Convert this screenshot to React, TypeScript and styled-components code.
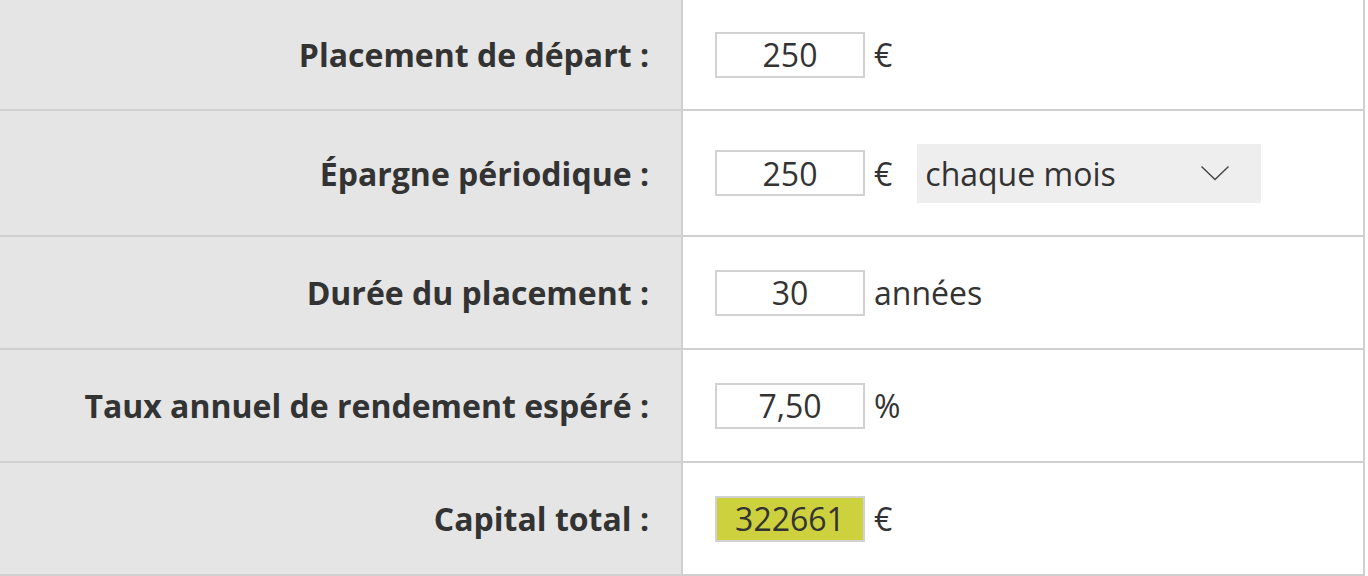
import styled, { createGlobalStyle } from "styled-components";

const GlobalStyle = createGlobalStyle`
  html, body {
    margin: 0;
    padding: 0;
    background: #ffffff;
  }
  body {
    font-family: "Open Sans", "Noto Sans", sans-serif;
    color: #333333;
  }
`;

const rows = [
  { label: "Placement de départ :", value: "250", unit: "€", height: 109 },
  { label: "Épargne périodique :", value: "250", unit: "€", height: 124, select: "chaque mois" },
  { label: "Durée du placement :", value: "30", unit: "années", height: 111 },
  { label: "Taux annuel de rendement espéré :", value: "7,50", unit: "%", height: 111 },
  { label: "Capital total :", value: "322661", unit: "€", height: 111, result: true },
];

const App = () => {
  return (
    <>
      <GlobalStyle />
      <Table>
        {rows.map((row) => (
          <Row key={row.label} $height={row.height}>
            <LabelCell>
              <Label>{row.label}</Label>
            </LabelCell>
            <FieldCell>
              <NumberBox $result={row.result}>{row.value}</NumberBox>
              <Unit>{row.unit}</Unit>
              {row.select && (
                <Select>
                  <span>{row.select}</span>
                  <Chevron width="30" height="16" viewBox="0 0 30 16">
                    <path d="M1.5 1.5 L15 14.5 L28.5 1.5" fill="none" stroke="#444" strokeWidth="1.4" />
                  </Chevron>
                </Select>
              )}
            </FieldCell>
          </Row>
        ))}
      </Table>
    </>
  );
};

const Table: any = styled.div`
  width: 1365px;
  display: flex;
  flex-direction: column;
`;

const Row: any = styled.div<{ $height: number }>`
  display: grid;
  grid-template-columns: 681px 680px;
  column-gap: 2px;
  background: #d0d0d0;
  padding-right: 2px;
  height: ${(p) => p.$height}px;
  border-bottom: 2px solid #d0d0d0;
`;

const LabelCell: any = styled.div`
  background: #e5e5e5;
  display: flex;
  align-items: center;
  justify-content: flex-end;
  padding-right: 32px;
`;

const Label: any = styled.span`
  font-size: 32px;
  font-weight: 700;
  color: #333333;
`;

const FieldCell: any = styled.div`
  background: #ffffff;
  display: flex;
  align-items: center;
  padding-left: 32px;
`;

const NumberBox: any = styled.div<{ $result?: boolean }>`
  box-sizing: border-box;
  width: 150px;
  height: 46px;
  border: 2px solid #d2d2d2;
  background: ${(p) => (p.$result ? "#cdd13e" : "#ffffff")};
  display: flex;
  align-items: center;
  justify-content: center;
  font-size: 32px;
  color: #333333;
`;

const Unit: any = styled.span`
  font-size: 32px;
  color: #333333;
  margin-left: 9px;
`;

const Select: any = styled.div`
  box-sizing: border-box;
  width: 344px;
  height: 59px;
  margin-left: 25px;
  background: #eeeeee;
  display: flex;
  align-items: center;
  justify-content: space-between;
  padding: 0 31px 0 8px;
  font-size: 32px;
  color: #333333;
`;

const Chevron: any = styled.svg`
  display: block;
`;

export default App;
